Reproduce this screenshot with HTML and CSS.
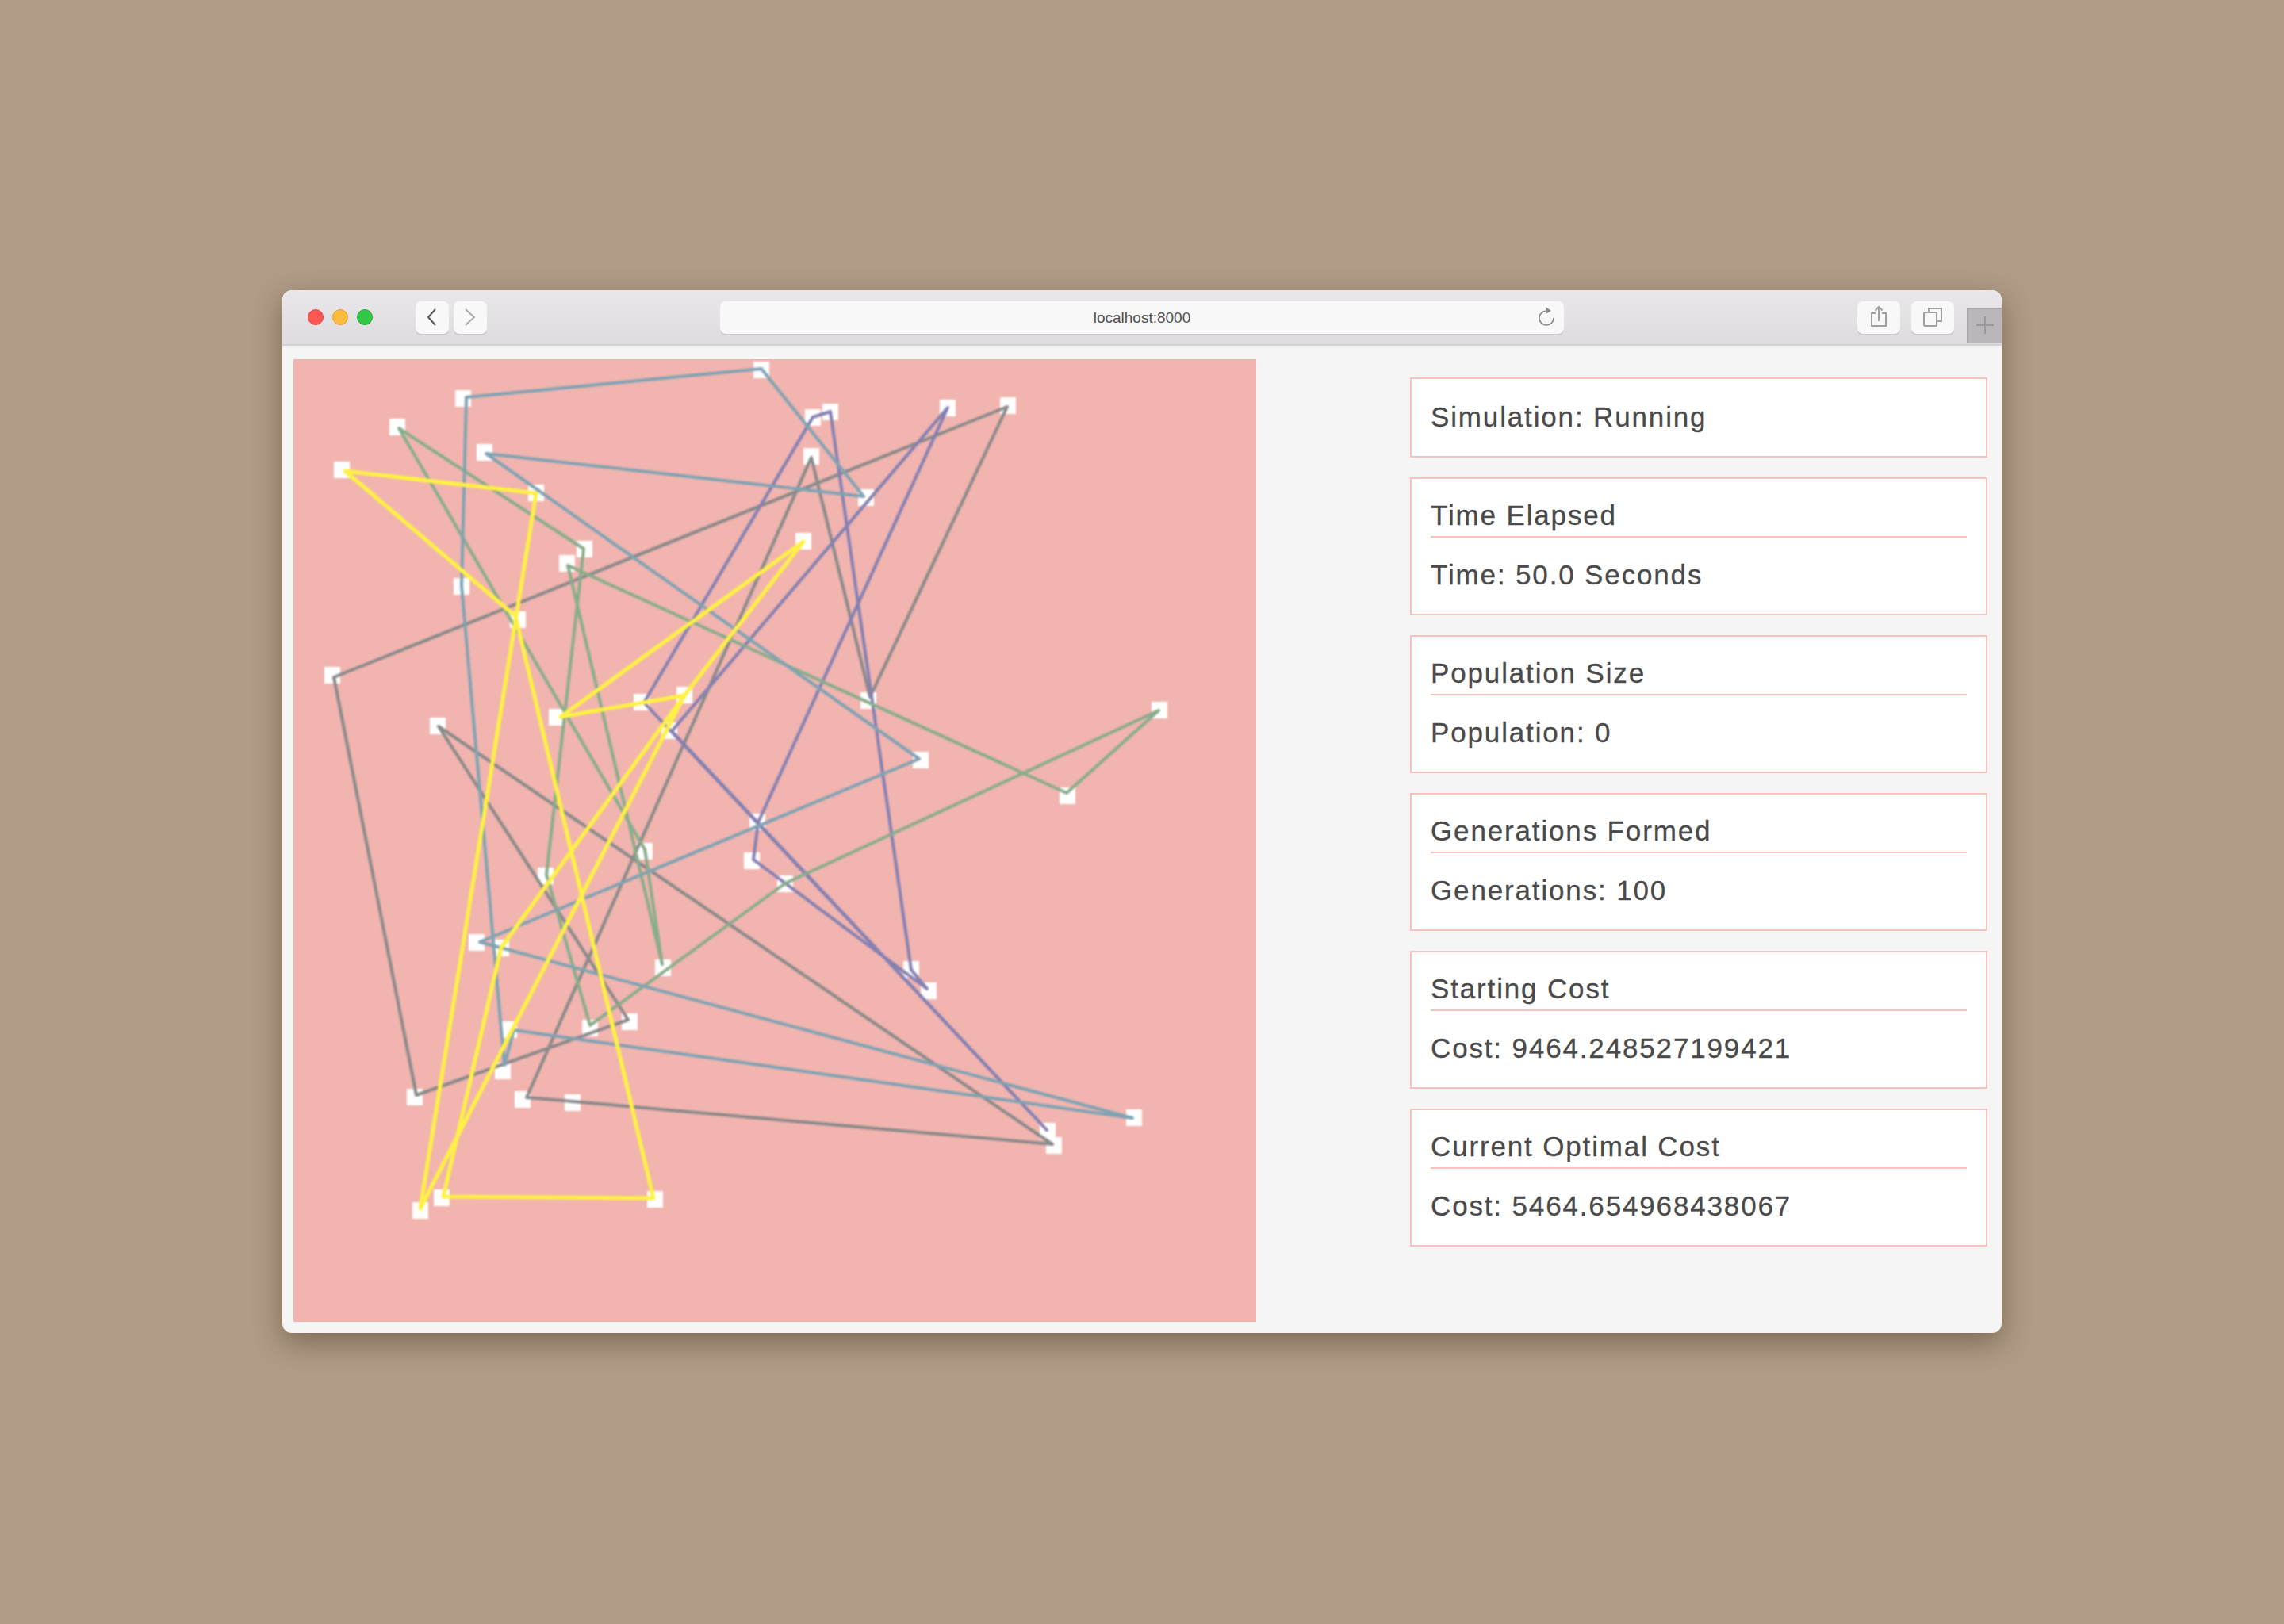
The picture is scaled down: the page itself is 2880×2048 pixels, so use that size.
FILE: index.html
```html
<!DOCTYPE html>
<html lang="en">
<head>
    <meta charset="UTF-8">
    <title>Genetic Algorithm</title>
    <link rel="stylesheet" href="styles.css">
</head>
<body>

    <div class="window">
        <div class="toolbar">
            <div class="lights">
                <span class="light red"></span>
                <span class="light orange"></span>
                <span class="light green"></span>
            </div>
            <div class="nav">
                <div class="tool-btn nav-btn">
                    <svg width="42" height="41" viewBox="0 0 42 41"><path d="M25 10 L16 20 L25 30" fill="none" stroke="#555" stroke-width="2"/></svg>
                </div>
                <div class="tool-btn nav-btn">
                    <svg width="42" height="41" viewBox="0 0 42 41"><path d="M15 10 L26 20 L15 30" fill="none" stroke="#aaa" stroke-width="2"/></svg>
                </div>
            </div>
            <div class="tool-btn address">
                <span>localhost:8000</span>
                <svg class="reload" width="24" height="28" viewBox="0 0 24 28"><path d="M12 7 a9 9 0 1 0 9 9" fill="none" stroke="#8a8a8a" stroke-width="1.6"/><path d="M11 2 L18 7 L11 11 Z" fill="#8a8a8a"/></svg>
            </div>
            <div class="tool-btn action share">
                <svg width="54" height="41" viewBox="0 0 54 41"><path d="M23 15 H18 V31 H36 V15 H31 M27 25 V7 M22.5 11.5 L27 7 L31.5 11.5" fill="none" stroke="#a0a0a0" stroke-width="2"/></svg>
            </div>
            <div class="tool-btn action">
                <svg width="54" height="41" viewBox="0 0 54 41"><rect x="16" y="14" width="16" height="17" rx="1" fill="none" stroke="#a0a0a0" stroke-width="2"/><path d="M22 14 V9 H38 V25 H32" fill="none" stroke="#a0a0a0" stroke-width="2"/></svg>
            </div>
            <div class="new-tab">
                <svg width="44" height="44" viewBox="0 0 44 44"><path d="M12 22 H34 M23 11 V33" fill="none" stroke="#9a9a9c" stroke-width="2"/></svg>
            </div>
        </div>

        <div class="content">
            <svg class="canvas" width="1214" height="1214" viewBox="370 453 1214 1214">
                <g class="drawing">
                    <g fill="#fff">
                        <rect x="574" y="492" width="20" height="21"/><rect x="950" y="456" width="20" height="21"/><rect x="1082" y="617" width="20" height="21"/><rect x="601" y="560" width="20" height="21"/><rect x="1151" y="948" width="20" height="21"/><rect x="591" y="1178" width="20" height="21"/><rect x="1420" y="1399" width="20" height="21"/><rect x="632" y="1288" width="20" height="21"/><rect x="624" y="1340" width="20" height="21"/><rect x="572" y="729" width="20" height="21"/>
                        <rect x="421" y="582" width="20" height="21"/><rect x="666" y="611" width="20" height="21"/><rect x="643" y="771" width="20" height="21"/><rect x="1003" y="672" width="20" height="21"/><rect x="692" y="894" width="20" height="21"/><rect x="853" y="866" width="20" height="21"/><rect x="816" y="1502" width="20" height="21"/><rect x="547" y="1500" width="20" height="21"/><rect x="520" y="1516" width="20" height="21"/><rect x="622" y="1185" width="20" height="21"/>
                        <rect x="491" y="528" width="20" height="21"/><rect x="727" y="682" width="20" height="21"/><rect x="705" y="700" width="20" height="21"/><rect x="1452" y="885" width="20" height="21"/><rect x="1336" y="993" width="20" height="21"/><rect x="826" y="1210" width="20" height="21"/><rect x="803" y="1063" width="20" height="21"/><rect x="678" y="1094" width="20" height="21"/><rect x="734" y="1286" width="20" height="21"/><rect x="980" y="1104" width="20" height="21"/>
                        <rect x="1015" y="516" width="20" height="21"/><rect x="1037" y="509" width="20" height="21"/><rect x="1185" y="504" width="20" height="21"/><rect x="799" y="875" width="20" height="21"/><rect x="834" y="911" width="20" height="21"/><rect x="945" y="1026" width="20" height="21"/><rect x="938" y="1075" width="20" height="21"/><rect x="1139" y="1212" width="20" height="21"/><rect x="1161" y="1239" width="20" height="21"/><rect x="1311" y="1416" width="20" height="21"/>
                        <rect x="409" y="841" width="20" height="21"/><rect x="1261" y="501" width="20" height="21"/><rect x="1085" y="873" width="20" height="21"/><rect x="1013" y="565" width="20" height="21"/><rect x="649" y="1376" width="20" height="21"/><rect x="712" y="1380" width="20" height="21"/><rect x="1319" y="1434" width="20" height="21"/><rect x="542" y="905" width="20" height="21"/><rect x="784" y="1278" width="20" height="21"/><rect x="513" y="1373" width="20" height="21"/>
                    </g>
                    <polygon class="route route-gray" points="421,854 1270,513 1097,879 1023,577 664,1384 722,1389 1327,1443 553,916 792,1286 525,1381"/>
                    <polygon class="route route-purple" points="1025,526 1047,519 1149,1223 1169,1247 950,1084 956,1037 1195,514 847,922 1320,1425 812,886"/>
                    <polygon class="route route-green" points="503,540 736,692 689,1103 744,1293 990,1114 1461,896 1345,1000 716,713 835,1216 813,1071"/>
                    <polygon class="route route-blue" points="588,501 960,465 1089,626 613,572 1159,957 605,1188 1428,1410 648,1299 636,1343 582,739"/>
                    <polygon class="route route-yellow" points="435,594 676,622 530,1524 863,877 1013,683 707,904 863,877 632,1195 559,1509 824,1511 650,777"/>
                </g>
            </svg>

            <div class="panel">
                <div class="card">
                    <p class="status">Simulation: Running</p>
                </div>
                <div class="card">
                    <h3>Time Elapsed</h3>
                    <p>Time: 50.0 Seconds</p>
                </div>
                <div class="card">
                    <h3>Population Size</h3>
                    <p>Population: 0</p>
                </div>
                <div class="card">
                    <h3>Generations Formed</h3>
                    <p>Generations: 100</p>
                </div>
                <div class="card">
                    <h3>Starting Cost</h3>
                    <p>Cost: 9464.248527199421</p>
                </div>
                <div class="card">
                    <h3>Current Optimal Cost</h3>
                    <p>Cost: 5464.654968438067</p>
                </div>
            </div>
        </div>
    </div>

</body>
</html>
```

FILE: styles.css
```css
/* Basic Reset */
* {
    margin: 0;
    padding: 0;
    box-sizing: border-box;
}

body {
    font-family: "Liberation Sans", Arial, sans-serif;
    background-color: #b09c87;
    width: 2880px;
    height: 2048px;
    padding: 366px 0 0 356px;
    overflow: hidden;
}

/* Browser Window */
.window {
    width: 2168px;
    height: 1315px;
    border-radius: 12px;
    overflow: hidden;
    background-color: #f5f5f5;
    box-shadow: 0 12px 36px rgba(50, 30, 10, 0.42);
}

.toolbar {
    display: flex;
    align-items: flex-start;
    height: 70px;
    padding: 14px 0 0 32px;
    background: linear-gradient(#e9e7e9, #dedcdf);
    border-bottom: 2px solid #d3d1d3;
}

.lights {
    display: flex;
    gap: 11px;
    padding-top: 10px;
    width: 136px;
}

.light {
    width: 20px;
    height: 20px;
    border-radius: 50%;
}

.red {
    background-color: #fc5753;
    border: 1px solid #df4744;
}

.orange {
    background-color: #fdbc40;
    border: 1px solid #de9f34;
}

.green {
    background-color: #33c748;
    border: 1px solid #27aa35;
}

.tool-btn {
    height: 41px;
    background-color: #f8f8f8;
    border-radius: 7px;
    box-shadow: 0 2px 0 #c9c7c9;
}

.nav {
    display: flex;
    gap: 6px;
    width: 384px;
}

.nav-btn {
    width: 42px;
}

.address {
    position: relative;
    width: 1064px;
    display: flex;
    justify-content: center;
    align-items: center;
    font-size: 19px;
    color: #4f4f4f;
}

.reload {
    position: absolute;
    right: 10px;
    top: 5px;
}

.action {
    width: 54px;
    margin-right: 14px;
}

.share {
    margin-left: 370px;
}

.new-tab {
    width: 44px;
    height: 44px;
    margin: 8px 0 0 2px;
    background-color: #b9b7b9;
    border-top: 2px solid #a8a6a8;
    border-left: 2px solid #a8a6a8;
}

.new-tab svg {
    display: block;
    margin: -2px 0 0 -2px;
}

/* Main Area */
.content {
    display: flex;
    padding: 17px 18px 0 14px;
}

.canvas {
    flex: none;
    display: block;
    background-color: #f2b4af;
}

.drawing {
    filter: blur(0.8px);
}

.route {
    fill: none;
    stroke-width: 4;
    stroke-linejoin: round;
}

.route-gray {
    stroke: #8a8a8a;
}

.route-purple {
    stroke: #8480b2;
}

.route-green {
    stroke: #88ad8b;
}

.route-blue {
    stroke: #7fa3b3;
}

.route-yellow {
    stroke: #fff144;
    stroke-width: 5;
}

.panel {
    flex: 1;
    margin-left: 194px;
    padding-top: 23px;
    display: flex;
    flex-direction: column;
    gap: 25px;
}

.card {
    background-color: #fff;
    border: 2px solid #f8c2be;
    padding: 22px 24px 24px;
    color: #4a4a4a;
    font-size: 35px;
    letter-spacing: 1.85px;
    -webkit-text-stroke: 0.3px #4a4a4a;
}

.card h3 {
    font-size: 35px;
    font-weight: normal;
    line-height: 48px;
    padding-bottom: 2px;
    border-bottom: 2px solid #f8c2be;
    margin-bottom: 23px;
}

.card p {
    line-height: 48px;
    padding-bottom: 1px;
}

.card .status {
    line-height: 51px;
    padding-bottom: 0;
}
```
